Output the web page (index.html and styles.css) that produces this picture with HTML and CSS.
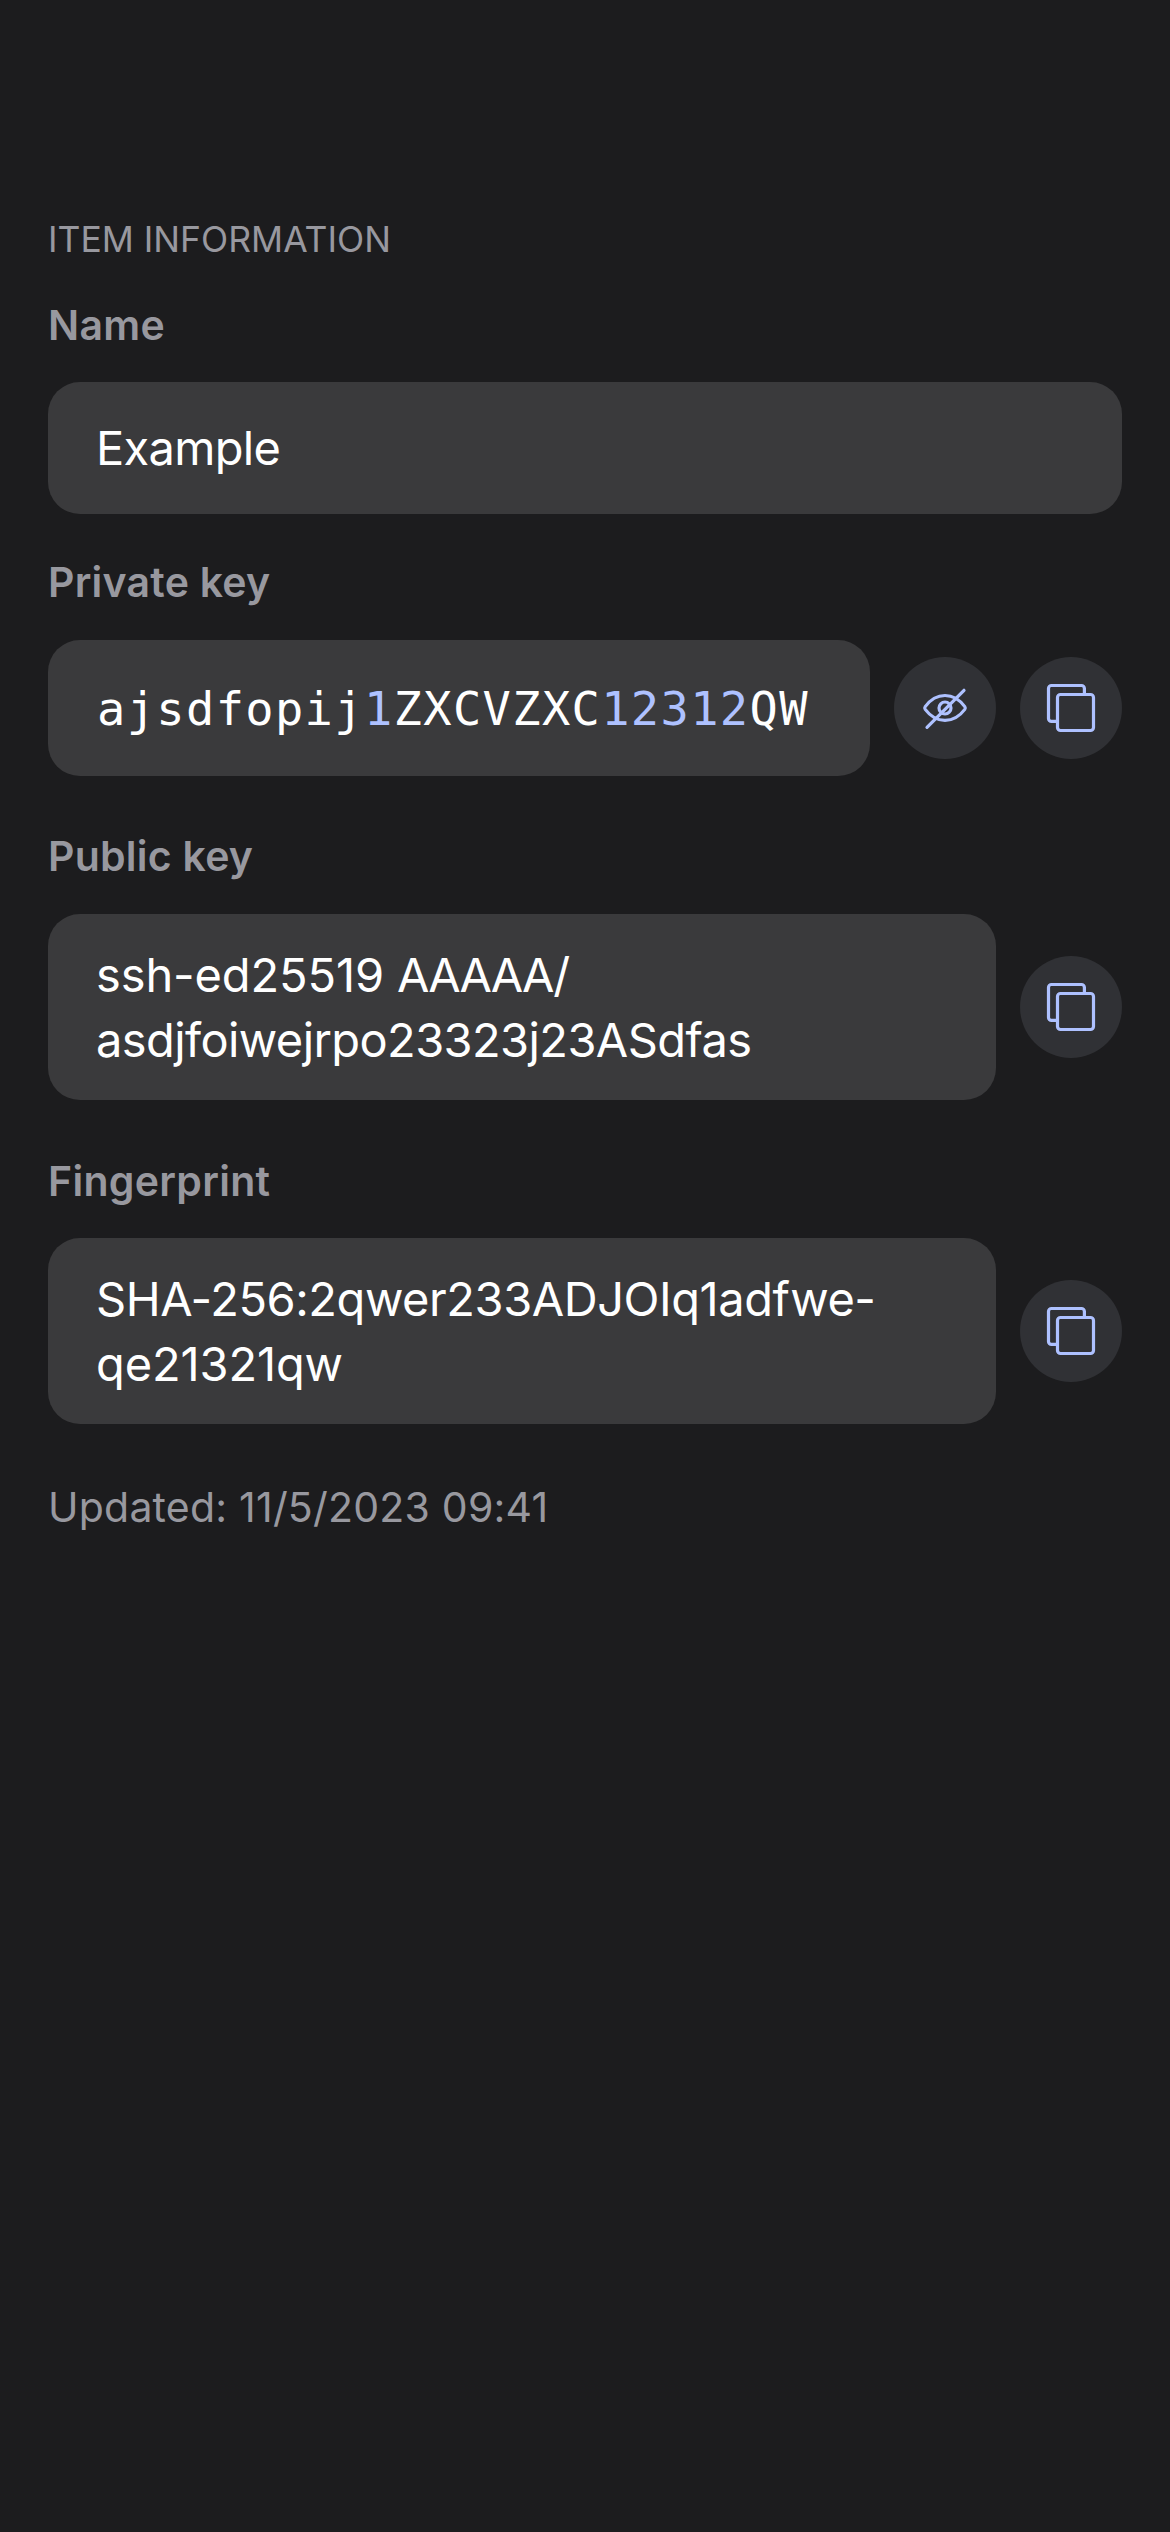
FILE: index.html
```html
<!DOCTYPE html>
<html lang="en">
<head>
<meta charset="utf-8">
<title>Item information</title>
<link rel="stylesheet" href="styles.css">
</head>
<body>
<svg class="defs" aria-hidden="true">
  <symbol id="copy" viewBox="0 0 102 102">
    <path d="M64.4 37V31.5a3 3 0 0 0-3-3H31.5a3 3 0 0 0-3 3V61.4a3 3 0 0 0 3 3H37"/>
    <rect x="37.5" y="37.5" width="36" height="36" rx="3"/>
  </symbol>
  <symbol id="eye-slash" viewBox="0 0 102 102">
    <path d="M31.2 49.6C36 43.2 43 38.5 51 38.5S66 43.2 70.8 49.6Q71.8 51 70.8 52.4C66 58.8 59 63.4 51 63.4S36 58.8 31.2 52.4Q30.2 51 31.2 49.6Z"/>
    <circle cx="51" cy="51" r="6"/>
    <path d="M33 70.3L70 33.3"/>
  </symbol>
</svg>
<main class="page">
  <h1 class="heading">ITEM INFORMATION</h1>
  <section class="field field-name">
    <h2 class="label label-name">Name</h2>
    <div class="row"><div class="box single">Example</div></div>
  </section>
  <section class="field field-private">
    <h2 class="label">Private key</h2>
    <div class="row">
      <div class="box mono">ajsdfopij<span class="digit">1</span>ZXCVZXC<span class="digit">12312</span>QW</div>
      <button class="action" aria-label="Hide"><svg class="icon"><use href="#eye-slash"/></svg></button>
      <button class="action" aria-label="Copy"><svg class="icon"><use href="#copy"/></svg></button>
    </div>
  </section>
  <section class="field field-public">
    <h2 class="label">Public key</h2>
    <div class="row">
      <div class="box double"><span class="line">ssh-ed25519 <span class="tightest">AAAAA/</span></span><span class="line tighter">asdjfoiwejrpo23323j23ASdfas</span></div>
      <button class="action" aria-label="Copy"><svg class="icon"><use href="#copy"/></svg></button>
    </div>
  </section>
  <section class="field field-fingerprint">
    <h2 class="label label-fingerprint">Fingerprint</h2>
    <div class="row">
      <div class="box double"><span class="line tight">SHA-256:2qwer233ADJOIq1adfwe-</span><span class="line">qe21321qw</span></div>
      <button class="action" aria-label="Copy"><svg class="icon"><use href="#copy"/></svg></button>
    </div>
  </section>
  <p class="updated">Updated: 11/5/2023 09:41</p>
</main>
</body>
</html>
```
FILE: styles.css
```css
* { box-sizing: border-box; }
body {
  margin: 0;
  background: #1c1c1e;
  color: #fff;
  font-family: Inter, "Liberation Sans", sans-serif;
}
.defs { display: block; width: 0; height: 0; }
.page {
  min-height: 2532px;
  padding: 216px 48px 0;
}
.heading, .label, .updated { margin: 0; color: #98989f; }
.heading {
  font-size: 35.5px;
  line-height: 48px;
  font-weight: 400;
}
.label {
  margin-bottom: 28px;
  font-size: 41px;
  line-height: 60px;
  font-weight: 600;
  letter-spacing: 0.24px;
}
.label-name { margin-bottom: 27px; letter-spacing: 0.34px; }
.label-fingerprint { margin-bottom: 27px; letter-spacing: 0.3px; }
.field-name { margin-top: 31px; }
.field-private { margin-top: 38px; }
.field-public { margin-top: 50px; }
.field-fingerprint { margin-top: 51px; }
.row {
  display: flex;
  align-items: center;
  gap: 24px;
}
.box {
  flex: 1;
  min-width: 0;
  padding: 28px 48px;
  border-radius: 32px;
  background: #3a3a3c;
  font-size: 47px;
  line-height: 65px;
  white-space: nowrap;
}
.single { height: 132px; padding-block: 33px; letter-spacing: -0.7px; }
.mono {
  height: 136px;
  padding: 36px 40px 35px 49px;
  font-family: "DejaVu Sans Mono", "Liberation Mono", monospace;
  letter-spacing: 1.36px;
}
.digit { color: #aec1ff; }
.line { display: block; letter-spacing: -0.12px; }
.tight { letter-spacing: -0.44px; }
.tighter { letter-spacing: -0.59px; }
.tightest { letter-spacing: -1.9px; }
.action {
  flex: none;
  width: 102px;
  height: 102px;
  padding: 0;
  border: 0;
  border-radius: 50%;
  background: #303135;
}
.icon {
  display: block;
  width: 102px;
  height: 102px;
  fill: none;
  stroke: #aec1ff;
  stroke-width: 3.2;
  stroke-linecap: round;
  stroke-linejoin: round;
}
.updated {
  margin-top: 53px;
  font-size: 41px;
  line-height: 60px;
  letter-spacing: 0.22px;
}
```
